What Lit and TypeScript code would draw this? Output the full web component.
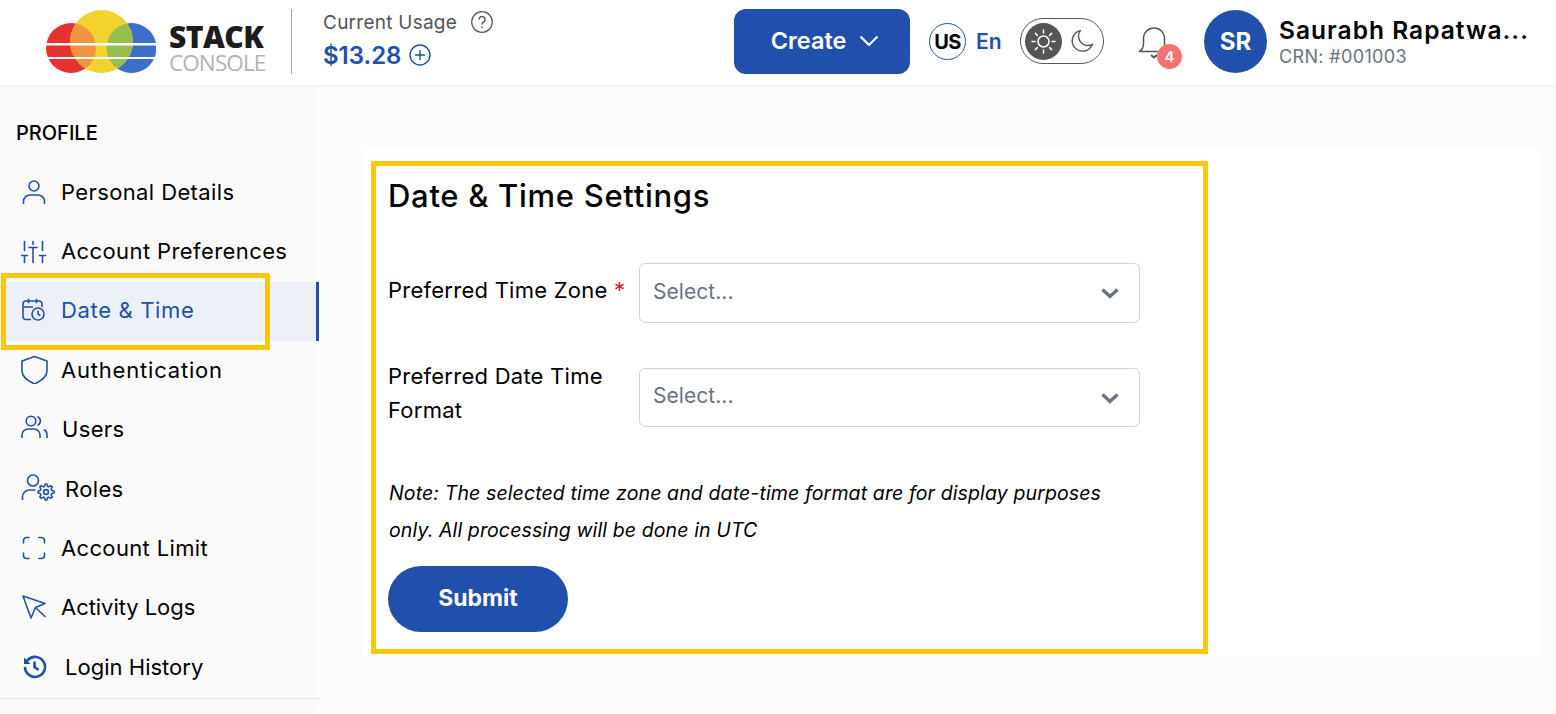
import { LitElement, css, html, svg } from 'lit';
import { customElement } from 'lit/decorators.js';

// outline of a cog, teeth alternate between the two radii
function gearPath(cx: number, cy: number, outer: number, inner: number, teeth: number) {
  const pts: string[] = [];
  for (let i = 0; i < teeth * 4; i++) {
    const a = ((i - 0.5) * Math.PI * 2) / (teeth * 4);
    const r = i % 4 < 2 ? outer : inner;
    pts.push(`${(cx + r * Math.cos(a)).toFixed(2)} ${(cy + r * Math.sin(a)).toFixed(2)}`);
  }
  return `M${pts.join('L')}z`;
}

const navIcons: Record<string, unknown> = {
  person: svg`<circle cx="13" cy="7" r="5"/><path d="M2.500 25v-2.500a6.500 6.500 0 0 1 6.500-6.500h8a6.500 6.500 0 0 1 6.500 6.500V25"/>`,
  sliders: svg`<path d="M3.500 3.500v9M.5 17.500h6M3.500 17.500v7M12 3.500v3M8 9.500h8M12 9.500v15M21.500 3.500v9M18.500 17.500h6M21.500 17.500v7" stroke-linecap="round"/>`,
  calendar: svg`<path d="M10 21.500H5A3 3 0 0 1 2 18.500V6a3 3 0 0 1 3-3h13a3 3 0 0 1 3 3v3M7.500 .8v4.500M15.500 .8v4.500M2 9h10"/><circle cx="17" cy="16" r="6"/><path d="M17 12.500v3.500l2.300 1.700"/>`,
  shield: svg`<path d="M13.500 1.500 26 6v10c0 5.500-5 9.500-12.500 13C6 25.500 1 21.500 1 16V6z" stroke-linejoin="round"/>`,
  users: svg`<circle cx="10" cy="6" r="4.800"/><path d="M16.500 1.800a4.500 4.500 0 0 1 0 8.400M1 23v-3a6 6 0 0 1 6-6h6a6 6 0 0 1 6 6v3M23 14.500a6 6 0 0 1 3 5v3.500"/>`,
  roles: svg`<circle cx="12" cy="8.500" r="5.500"/><path d="M1.500 28v-3a7 7 0 0 1 7-7h6"/><circle cx="25" cy="20" r="2.400"/><path d=${gearPath(25, 20, 8, 5.800, 8)} stroke-linejoin="round"/>`,
  limit: svg`<path d="M2.500 8V5.500a3 3 0 0 1 3-3H8M18 2.500h2.500a3 3 0 0 1 3 3V8M23.500 18v2.500a3 3 0 0 1-3 3H18M8 23.500H5.500a3 3 0 0 1-3-3V18" stroke-linecap="round"/>`,
  cursor: svg`<path d="M2 2 24 9.500 14.500 13.500 10 24z" stroke-linejoin="round"/><path d="M14.500 13.500 24 22.500" stroke-linecap="round"/>`,
  history: svg`<path d="M4 13a10 10 0 1 0 3-7.200L3.500 9" stroke-width="2.600"/><path d="M3 3.500v6.500h6.500z" fill="#2050ac" stroke="none"/><path d="M13.500 7.500v5.500l4 3" stroke-width="2.600"/>`,
};

const navItems = [
  { label: 'Personal Details', icon: 'person', size: 26, gap: 40, spacing: 0.38 },
  { label: 'Account Preferences', icon: 'sliders', size: 26, gap: 40, spacing: 0.4 },
  { label: 'Date & Time', icon: 'calendar', size: 24, gap: 40, spacing: 0.65 },
  { label: 'Authentication', icon: 'shield', size: 29, gap: 40, spacing: 0.8 },
  { label: 'Users', icon: 'users', size: 28, gap: 41, spacing: 0.35 },
  { label: 'Roles', icon: 'roles', size: 34, gap: 44, spacing: 0.35 },
  { label: 'Account Limit', icon: 'limit', size: 26, gap: 40, spacing: 0.35 },
  { label: 'Activity Logs', icon: 'cursor', size: 26, gap: 40, spacing: -0.05 },
  { label: 'Login History', icon: 'history', size: 26, gap: 44, spacing: 0.02 },
];

const chevron = html`<svg class="chev" viewBox="0 0 20 20" width="20" height="20" fill="none" stroke="#6b7280" stroke-width="3.400"><path d="M2.500 6.500 10 13.500l7.500-7"/></svg>`;

@customElement('app-root')
export class AppRoot extends LitElement {
  static styles = css`
    :host {
      display: block;
      position: relative;
      width: 1556px;
      height: 714px;
      overflow: hidden;
      background: #fbfcfe;
      font-family: 'Inter', 'Open Sans', sans-serif;
      color: #000;
    }

    .topbar {
      height: 85px;
      box-sizing: border-box;
      padding-bottom: 2px;
      background: #fff;
      box-shadow: 0 1px 4px rgba(0, 0, 0, 0.06);
      display: flex;
      align-items: center;
      position: relative;
      z-index: 1;
    }

    .logo {
      margin-left: 46px;
      display: flex;
      align-items: center;
      width: 245px;
      height: 64px;
      flex: none;
    }

    .wordmark {
      margin-left: 13px;
      display: flex;
      flex-direction: column;
      font-family: 'Open Sans', sans-serif;
      margin-top: 15px;
    }

    .wordmark b {
      font-size: 30px;
      line-height: 26px;
      font-weight: 800;
      color: #1c1c1c;
      letter-spacing: -0.5px;
    }

    .wordmark span {
      font-size: 22.500px;
      line-height: 25px;
      color: #b3b3b3;
      letter-spacing: -0.9px;
    }

    .usage {
      border-left: 1px solid #a8a8a8;
      height: 65px;
      box-sizing: border-box;
      padding: 0 0 3px 31px;
      width: 443px;
      flex: none;
      display: flex;
      flex-direction: column;
      justify-content: center;
      gap: 7px;
    }

    .usage-top,
    .usage-amount {
      display: flex;
      align-items: center;
    }

    .usage-top {
      font-size: 19px;
      color: #555;
      gap: 14px;
      letter-spacing: 0.25px;
    }

    .usage-amount {
      font-size: 24px;
      font-weight: 600;
      color: #2050ac;
      gap: 8px;
    }

    .create {
      width: 176px;
      height: 65px;
      flex: none;
      box-sizing: border-box;
      padding: 0 0 2px 6px;
      border-radius: 12px;
      background: #2050ac;
      color: #fff;
      font-size: 23.500px;
      font-weight: 600;
      display: flex;
      align-items: center;
      justify-content: center;
      gap: 13px;
    }

    .flag {
      margin-left: 19px;
      width: 37px;
      height: 37px;
      flex: none;
      box-sizing: border-box;
      border: 1px solid #2050ac;
      border-radius: 50%;
      display: grid;
      place-items: center;
      font-size: 20px;
      font-weight: 700;
      letter-spacing: -0.5px;
    }

    .lang {
      margin-left: 10px;
      width: 44px;
      flex: none;
      font-size: 21px;
      font-weight: 600;
      color: #2050ac;
    }

    .toggle {
      width: 84px;
      height: 46px;
      flex: none;
      box-sizing: border-box;
      margin-bottom: 1px;
      border: 1px solid #555;
      border-radius: 23px;
      display: flex;
      align-items: center;
      padding-left: 4px;
      gap: 8px;
    }

    .sun {
      width: 37px;
      height: 37px;
      border-radius: 50%;
      background: #555;
      display: grid;
      place-items: center;
    }

    .bell {
      position: relative;
      margin-left: 34px;
      width: 66px;
      height: 44px;
      flex: none;
    }

    .bell svg {
      display: block;
      margin-top: 5px;
    }

    .badge {
      position: absolute;
      left: 19px;
      top: 24px;
      width: 25px;
      height: 25px;
      border-radius: 50%;
      background: #f87171;
      color: #fff;
      font-size: 15px;
      font-weight: 600;
      display: grid;
      place-items: center;
    }

    .avatar {
      width: 63px;
      height: 63px;
      flex: none;
      border-radius: 50%;
      background: #2050ac;
      color: #fff;
      font-size: 24px;
      font-weight: 700;
      display: grid;
      place-items: center;
    }

    .who {
      margin-left: 12px;
      padding-top: 1px;
      display: flex;
      flex-direction: column;
    }

    .who b {
      font-size: 24.500px;
      font-weight: 600;
      line-height: 30px;
      letter-spacing: 1.02px;
      white-space: nowrap;
    }

    .who span {
      font-size: 18px;
      line-height: 24px;
      color: #6b7280;
      letter-spacing: 0.35px;
    }

    .body {
      display: flex;
      height: 629px;
    }

    .sidebar {
      width: 319px;
      flex: none;
      background: #fafafa;
      padding-top: 34px;
      box-sizing: border-box;
    }

    .sidebar h2 {
      margin: 0 0 16px 16px;
      font-size: 20px;
      line-height: 28px;
      font-weight: 500;
    }

    .nav {
      display: flex;
      flex-direction: column;
      border-bottom: 1px solid #e2e2e2;
    }

    .nav-item {
      height: 59.400px;
      box-sizing: border-box;
      padding: 0 0 2px 21px;
      display: flex;
      align-items: center;
      font-size: 22px;
    }

    .nav-icon {
      flex: none;
      display: flex;
      align-items: center;
    }

    .nav-item svg {
      display: block;
      fill: none;
      stroke: #2050ac;
      stroke-width: 1.600;
    }

    .nav-item.active {
      background: #ecf1f9;
      color: #2050ac;
      border-right: 3px solid #2050ac;
    }

    .content {
      flex: 1;
      padding: 63px 16px 0 43px;
    }

    .card {
      height: 509px;
      background: #fff;
      border-radius: 6px;
      box-sizing: border-box;
      padding: 26px 0 0 26px;
    }

    .card h1 {
      margin: 0 0 45px;
      font-size: 31px;
      line-height: 44px;
      font-weight: 500;
      letter-spacing: 0.7px;
    }

    .field {
      display: flex;
      align-items: center;
      margin-bottom: 36px;
    }

    .field label {
      width: 251px;
      padding-bottom: 7px;
      flex: none;
      font-size: 22px;
      line-height: 34px;
      letter-spacing: 0.25px;
    }

    .req {
      color: #e8141c;
    }

    .select {
      width: 501px;
      height: 60px;
      box-sizing: border-box;
      border: 1px solid #d1d1d8;
      border-radius: 6px;
      display: flex;
      align-items: center;
      justify-content: space-between;
      padding: 0 19px 0 13px;
      font-size: 21px;
      color: #6b7280;
      letter-spacing: 0.05px;
    }

    .select span {
      padding-bottom: 4px;
    }

    .field.second {
      margin-bottom: 39px;
    }

    .field.second label {
      padding-bottom: 9px;
    }

    .field.second .select {
      height: 59px;
    }

    .note {
      margin: 0 0 17px 1px;
      width: 730px;
      font-size: 19.500px;
      line-height: 37px;
      font-style: italic;
      letter-spacing: 0.12px;
    }

    .submit {
      width: 180px;
      height: 66px;
      box-sizing: border-box;
      padding-bottom: 2px;
      border-radius: 33px;
      background: #2050ac;
      color: #fff;
      font-size: 23px;
      font-weight: 700;
      display: grid;
      place-items: center;
    }

    .mark {
      position: absolute;
      box-sizing: border-box;
      border: 5px solid #fdc70f;
      z-index: 2;
    }

    .mark.nav-mark {
      left: 1px;
      top: 273px;
      width: 269px;
      height: 77px;
    }

    .mark.card-mark {
      left: 371px;
      top: 161px;
      width: 837px;
      height: 493px;
    }
  `;

  render() {
    return html`
      <header class="topbar">
        <div class="logo">
          <svg width="110" height="64" viewBox="46 10 110 64">
            <defs>
              <clipPath id="yellow-disc"><circle cx="101.500" cy="41.500" r="31.500" /></clipPath>
            </defs>
            <circle cx="71" cy="48" r="25" fill="#e8302e" />
            <circle cx="131.500" cy="48" r="25" fill="#3b6fcb" />
            <circle cx="101.500" cy="41.500" r="31.500" fill="#f2d22e" />
            <g clip-path="url(#yellow-disc)">
              <circle cx="71" cy="48" r="25" fill="#f0953f" />
              <circle cx="131.500" cy="48" r="25" fill="#95bf4f" />
            </g>
            <rect x="46" y="43" width="110" height="2.500" fill="#fff" />
            <rect x="46" y="57" width="110" height="2" fill="#fff" />
          </svg>
          <div class="wordmark"><b>STACK</b><span>CONSOLE</span></div>
        </div>
        <div class="usage">
          <div class="usage-top">
            Current Usage
            <svg width="22" height="22" viewBox="0 0 22 22" fill="none" stroke="#555" stroke-width="1.200">
              <circle cx="11" cy="11" r="10.300" />
              <path d="M8 8.500a3 3 0 1 1 4.500 2.600c-1 .6-1.500 1.100-1.500 2.400" stroke-width="1.500" />
              <path d="M11 15.500v1.500" stroke-width="1.500" />
            </svg>
          </div>
          <div class="usage-amount">
            $13.28
            <svg width="22" height="22" viewBox="0 0 22 22" fill="none" stroke="#2050ac" stroke-width="1.400">
              <circle cx="11" cy="11" r="10" />
              <path d="M11 6v10M6 11h10" />
            </svg>
          </div>
        </div>
        <div class="create">
          Create
          <svg width="20" height="12" viewBox="0 0 20 12" fill="none" stroke="#fff" stroke-width="2.200"><path d="M1.500 1.500 10 10l8.500-8.500" /></svg>
        </div>
        <div class="flag">US</div>
        <div class="lang">En</div>
        <div class="toggle">
          <span class="sun">
            <svg width="27" height="27" viewBox="0 0 27 27" fill="none" stroke="#fff" stroke-width="1.500" stroke-linecap="round">
              <circle cx="13.500" cy="13.500" r="5.500" />
              <path d="M13.500 2v3M13.500 22v3M2 13.500h3M22 13.500h3M5.400 5.400l2 2M19.600 19.600l2 2M5.400 21.600l2-2M19.600 7.400l2-2" />
            </svg>
          </span>
          <svg width="24" height="24" viewBox="0 0 22 22" fill="none" stroke="#555" stroke-width="1.300">
            <path d="M9.500 1.500a9.500 9.500 0 1 0 11 12.500 8.500 8.500 0 0 1-11-12.500z" stroke-linejoin="round" />
          </svg>
        </div>
        <div class="bell">
          <svg width="32" height="36" viewBox="0 0 32 36" fill="none" stroke="#555" stroke-width="1.500">
            <path d="M1.500 26.500c2.500-1.500 4-3 4-8v-5a10.500 10.500 0 0 1 21 0v5c0 5 1.500 6.500 4 8z" stroke-linejoin="round" />
            <path d="M13 30l3 2.500 3-2.500" stroke-width="2" />
          </svg>
          <span class="badge">4</span>
        </div>
        <div class="avatar">SR</div>
        <div class="who">
          <b>Saurabh Rapatwa...</b>
          <span>CRN: #001003</span>
        </div>
      </header>
      <div class="body">
        <aside class="sidebar">
          <h2>PROFILE</h2>
          <nav class="nav">
            ${navItems.map(
              (item) => html`
                <div class="nav-item ${item.label === 'Date & Time' ? 'active' : ''}" style="letter-spacing:${item.spacing}px">
                  <span class="nav-icon" style="width:${item.gap}px">
                    <svg width=${item.size} height=${item.size} viewBox="0 0 ${item.size} ${item.size}">${navIcons[item.icon]}</svg>
                  </span>
                  ${item.label}
                </div>
              `,
            )}
          </nav>
        </aside>
        <main class="content">
          <section class="card">
            <h1>Date &amp; Time Settings</h1>
            <div class="field">
              <label>Preferred Time Zone <span class="req">*</span></label>
              <div class="select"><span>Select...</span>${chevron}</div>
            </div>
            <div class="field second">
              <label>Preferred Date Time Format</label>
              <div class="select"><span>Select...</span>${chevron}</div>
            </div>
            <p class="note">Note: The selected time zone and date-time format are for display purposes only. All processing will be done in UTC</p>
            <div class="submit">Submit</div>
          </section>
        </main>
      </div>
      <div class="mark nav-mark"></div>
      <div class="mark card-mark"></div>
    `;
  }
}
